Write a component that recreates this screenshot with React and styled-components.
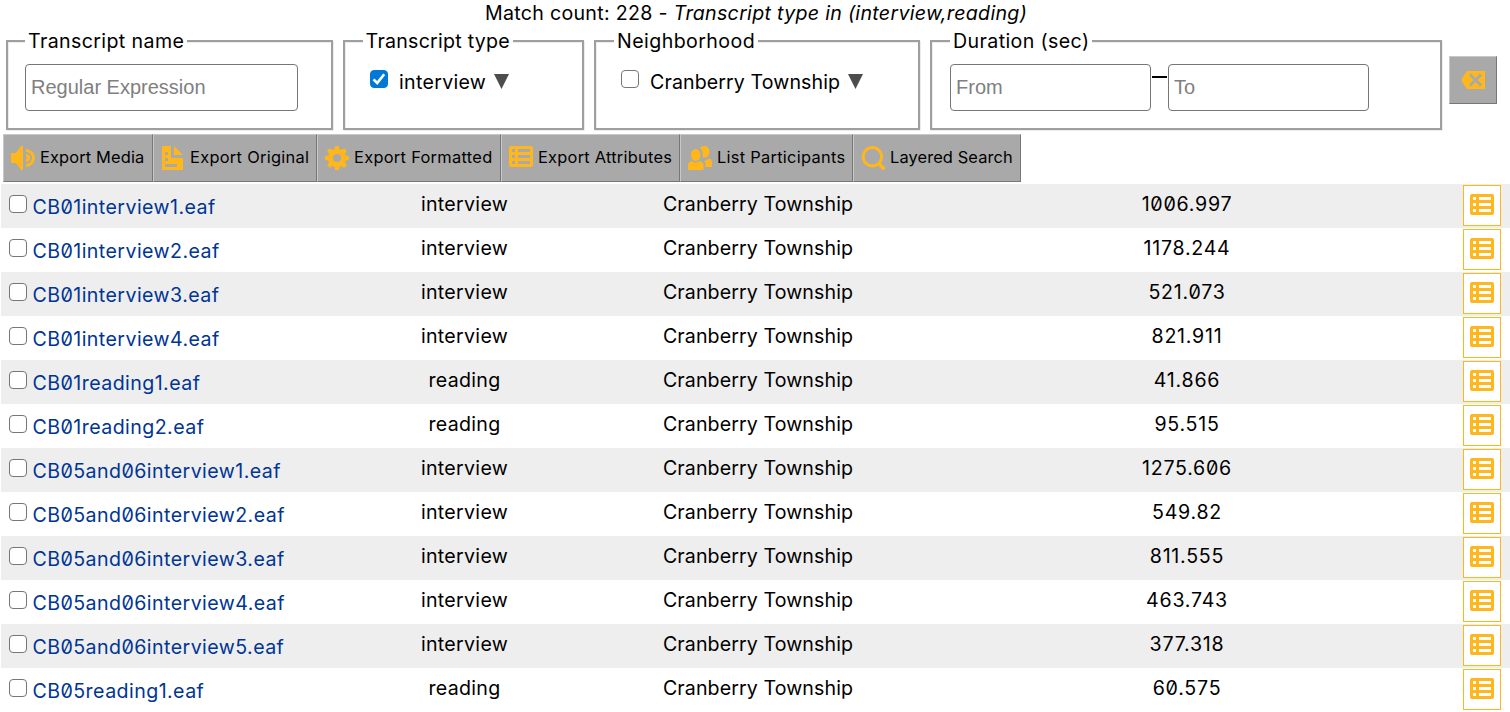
import React from "react";
import styled, { createGlobalStyle } from "styled-components";

const AMBER = "#ffb71b";

const GlobalStyle = createGlobalStyle`
  * { box-sizing: border-box; }
  body {
    margin: 0;
    background: #fff;
    color: #000;
    font-family: Inter, "Liberation Sans", sans-serif;
    font-size: 19.6px;
    line-height: 26px;
    letter-spacing: 0.3px;
    font-feature-settings: "zero" 1;
    overflow: hidden;
  }
`;

const Page = styled.main`
  display: flex;
  flex-direction: column;
  width: 1510px;
  height: 712px;
  overflow: hidden;
`;

const MatchCount = styled.div`
  height: 28px;
  padding-left: 2px;
  text-align: center;
  white-space: pre;
`;

const Filters = styled.div`
  display: flex;
  align-items: flex-start;
  height: 106px;
  padding-left: 6px;
`;

const Filter = styled.fieldset`
  width: ${(p) => p.$width}px;
  height: 102px;
  margin: 0 ${(p) => p.$gap}px 0 0;
  padding: 10px 0 0 ${(p) => p.$inset || 17}px;
  border: 2px solid #9f9f9f;
  box-shadow: 1px 1px 0 #ececec, inset 1px 1px 0 #ececec;
  min-width: 0;
`;

const Legend = styled.legend`
  height: 26px;
  padding: 0 3px;
  background: #fff;
  white-space: nowrap;
  letter-spacing: ${(p) => p.$spacing}px;
`;

const Fields = styled.div`
  display: flex;
  align-items: flex-start;
`;

const Field = styled.input`
  width: ${(p) => p.$width}px;
  height: 47px;
  padding: 0 5px 1px;
  border: 1px solid #767676;
  border-radius: 4px;
  outline: 0;
  font: 20px "Liberation Sans", sans-serif;
  &::placeholder { color: #808080; opacity: 1; }
`;

const Dash = styled.span`
  width: 15px;
  height: 2px;
  margin: 12px 1px 0;
  background: #000;
`;

const Option = styled.label`
  display: flex;
  align-items: center;
  height: 30px;
  padding: 5px 0 0 ${(p) => p.$inset}px;
  white-space: nowrap;
  letter-spacing: ${(p) => p.$spacing}px;
`;

const Tick = styled.input`
  appearance: none;
  flex: none;
  width: 18px;
  height: 18px;
  margin: 0;
  border: 1.5px solid #767676;
  border-radius: 4px;
  background: #fff;
  &:checked {
    border-color: #0078d7;
    background: #0078d7;
  }
`;

const TickHolder = styled.span`
  display: grid;
  flex: none;
  width: 18px;
  height: 18px;
  margin: ${(p) => p.$margin};
  & > * { grid-area: 1 / 1; }
  svg { z-index: 1; pointer-events: none; }
`;

const Arrow = styled.svg`
  width: 15px;
  height: 15px;
  margin-left: 8px;
`;

const ClearButton = styled.button`
  display: flex;
  align-items: center;
  justify-content: center;
  width: 48px;
  height: 48px;
  margin-top: 28px;
  padding: 0;
  border: 1px solid;
  border-color: #c8c8c8 #777 #777 #c8c8c8;
  background: #a9a9a9;
`;

const Toolbar = styled.nav`
  display: flex;
  height: 50px;
  padding-left: 3px;
`;

const ToolButton = styled.button`
  display: flex;
  align-items: center;
  width: ${(p) => p.$width}px;
  height: 48px;
  padding: 0 0 0 7px;
  border: 1px solid;
  border-color: #c8c8c8 #777 #777 #c8c8c8;
  background: #a9a9a9;
  color: #000;
  font: inherit;
  font-size: 16.4px;
  letter-spacing: ${(p) => p.$spacing}px;
  white-space: nowrap;
  svg { flex: none; margin-right: 5px; }
`;

const ToolLabel = styled.span`
  padding-bottom: 2px;
`;

const Icon = styled.svg`
  width: 24px;
  height: 24px;
  fill: ${AMBER};
`;

const List = styled.div`
  padding-left: 1px;
`;

const Row = styled.div`
  display: grid;
  grid-template-columns: 341px 245px 342px 516px 1fr;
  height: 44px;
  background: ${(p) => (p.$shaded ? "#eee" : "#fff")};
`;

const NameCell = styled.div`
  display: flex;
  padding: 11px 0 0 8px;
`;

const NameLink = styled.a`
  margin: -1px 0 0 5.5px;
  color: #003594;
  letter-spacing: 0.43px;
  text-decoration: none;
`;

const Cell = styled.div`
  padding-top: 7px;
  letter-spacing: ${(p) => p.$spacing}px;
  text-align: center;
`;

const AttributesButton = styled.button`
  display: flex;
  align-items: center;
  justify-content: center;
  width: 38px;
  height: 41px;
  margin: 1px 0 0 18px;
  padding: 1px 0 0;
  border: 1px solid ${AMBER};
  background: #fff;
`;

const MediaIcon = () => (
  <Icon viewBox="0 0 24 24">
    <path d="M0 7h5l5-7h2v24h-2l-5-7H0z" />
    <path d="M15 3a9 9 0 0 1 0 18v-3a6 6 0 0 0 0-12zM15 8a4 4 0 0 1 0 8v-3a1 1 0 0 0 0-2z" />
  </Icon>
);

const OriginalIcon = () => (
  <Icon viewBox="0 0 24 24">
    <path fillRule="evenodd" d="M1 0h9v12h12v12H1zM4 6v3h3V6zM4 12v3h3v-3zM4 18v3h12v-3zM13 0l9 9h-9z" />
  </Icon>
);

const TEETH = [0, 45, 90, 135, 180, 225, 270, 315];
const FormattedIcon = () => (
  <Icon viewBox="0 0 24 24">
    <circle cx="12" cy="12" r="6.6" fill="none" stroke={AMBER} strokeWidth="5" />
    {TEETH.map((a) => (
      <path key={a} d="M9 5L10.2 0h3.6L15 5z" transform={`rotate(${a} 12 12)`} />
    ))}
  </Icon>
);

const ListIcon = () => (
  <Icon viewBox="0 0 24 24">
    <path fillRule="evenodd" d="M2 0h20a2 2 0 0 1 2 2v17a2 2 0 0 1-2 2H2a2 2 0 0 1-2-2V2a2 2 0 0 1 2-2zM3 3v3h3V3zM9 3v3h12V3zM3 9v3h3V9zM9 9v3h12V9zM3 15v3h3v-3zM9 15v3h12v-3z" />
  </Icon>
);

const PeopleIcon = () => (
  <Icon viewBox="0 0 24 24">
    <ellipse cx="7.7" cy="9" rx="4.8" ry="6" />
    <path d="M0 24v-5q0-3 4-4 3.7 3 7.500 0 4 1 4 4v5zM13 .9C18-2 22 2 21.500 6.500 21 11 18 12.500 14.500 11 15 7 14.500 4 12 2zM17.500 21v-4l-1.500-2 2-.5 1-1 3-1q2 1 2 4v4.500z" />
  </Icon>
);

const SearchIcon = () => (
  <Icon viewBox="0 0 24 24">
    <circle cx="11.400" cy="10.700" r="9.200" fill="none" stroke={AMBER} strokeWidth="3" />
    <path d="M16 18.500l2.500-2.500 5.500 5q.5 3-2.500 3z" />
  </Icon>
);

const ClearIcon = () => (
  <Icon viewBox="0 0 24 24">
    <path d="M0 12l6-9h18v18H6z" />
    <path d="M9 6.500l11 11M20 6.500l-11 11" stroke="#a9a9a9" strokeWidth="3" />
  </Icon>
);

const Checkbox = ({ checked, margin }) => (
  <TickHolder $margin={margin}>
    <Tick type="checkbox" defaultChecked={checked} />
    {checked && (
      <svg viewBox="0 0 18 18" fill="none" stroke="#fff" strokeWidth="2.6">
        <path d="M3.500 9.300l3.700 3.700 7-8.800" />
      </svg>
    )}
  </TickHolder>
);

const DownArrow = () => (
  <Arrow viewBox="0 0 15 15"><path d="M0 0h15L7.500 15z" fill="#4d4d4d" /></Arrow>
);

const TOOLS = [
  ["Export Media", MediaIcon, 150, 0.15],
  ["Export Original", OriginalIcon, 164, 0.3],
  ["Export Formatted", FormattedIcon, 184, 0.3],
  ["Export Attributes", ListIcon, 179, 0.25],
  ["List Participants", PeopleIcon, 173, 0.28],
  ["Layered Search", SearchIcon, 168, 0.12],
];

const TRANSCRIPTS = [
  ["CB01interview1.eaf", "interview", "1006.997"],
  ["CB01interview2.eaf", "interview", "1178.244"],
  ["CB01interview3.eaf", "interview", "521.073"],
  ["CB01interview4.eaf", "interview", "821.911"],
  ["CB01reading1.eaf", "reading", "41.866"],
  ["CB01reading2.eaf", "reading", "95.515"],
  ["CB05and06interview1.eaf", "interview", "1275.606"],
  ["CB05and06interview2.eaf", "interview", "549.82"],
  ["CB05and06interview3.eaf", "interview", "811.555"],
  ["CB05and06interview4.eaf", "interview", "463.743"],
  ["CB05and06interview5.eaf", "interview", "377.318"],
  ["CB05reading1.eaf", "reading", "60.575"],
];

export default function App() {
  return (
    <Page>
      <GlobalStyle />
      <MatchCount>Match count: 228 - <i>Transcript type in (interview,reading)</i></MatchCount>
      <Filters>
        <Filter $width={327} $gap={10}>
          <Legend $spacing={0.38}>Transcript name</Legend>
          <Field $width={273} placeholder="Regular Expression" />
        </Filter>
        <Filter $width={241} $gap={10} $inset={17.6}>
          <Legend $spacing={0.25}>Transcript type</Legend>
          <Option $inset={7.4} $spacing={0.3}>
            <Checkbox checked margin="-5px 11px 0 0" />interview<DownArrow />
          </Option>
        </Filter>
        <Filter $width={326} $gap={10} $inset={18}>
          <Legend $spacing={0.42}>Neighborhood</Legend>
          <Option $inset={7} $spacing={0.1}>
            <Checkbox margin="-5px 11px 0 0" />Cranberry Township<DownArrow />
          </Option>
        </Filter>
        <Filter $width={512} $gap={7} $inset={18}>
          <Legend $spacing={0.38}>Duration (sec)</Legend>
          <Fields>
            <Field $width={201} placeholder="From" />
            <Dash />
            <Field $width={201} placeholder="To" />
          </Fields>
        </Filter>
        <ClearButton><ClearIcon /></ClearButton>
      </Filters>
      <Toolbar>
        {TOOLS.map(([label, Glyph, width, spacing]) => (
          <ToolButton key={label} $width={width} $spacing={spacing}>
            <Glyph /><ToolLabel>{label}</ToolLabel>
          </ToolButton>
        ))}
      </Toolbar>
      <List>
        {TRANSCRIPTS.map(([name, type, duration], i) => (
          <Row key={name} $shaded={i % 2 === 0}>
            <NameCell><Checkbox margin="0" /><NameLink href="#">{name}</NameLink></NameCell>
            <Cell $spacing={0.3}>{type}</Cell>
            <Cell $spacing={0.1}>Cranberry Township</Cell>
            <Cell $spacing={0.75}>{duration}</Cell>
            <AttributesButton><ListIcon /></AttributesButton>
          </Row>
        ))}
      </List>
    </Page>
  );
}
